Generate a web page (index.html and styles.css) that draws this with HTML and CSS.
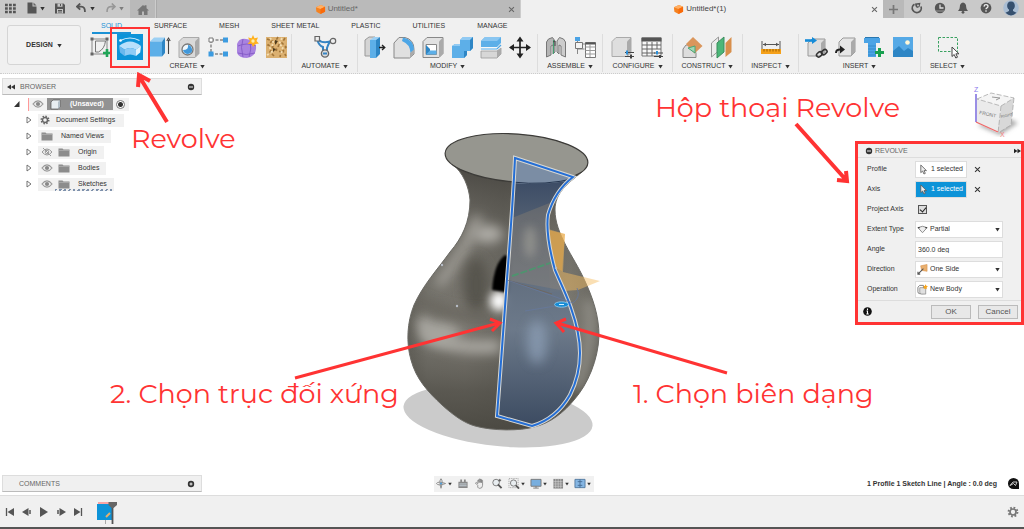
FILE: index.html
```
<!DOCTYPE html>
<html lang="en">
<head>
<meta charset="utf-8">
<meta name="viewport" content="width=device-width, initial-scale=1">
<title>Untitled*(1)</title>
<link rel="stylesheet" href="styles.css">
</head>
<body>
<svg class="defs" aria-hidden="true">
  <defs>
    <symbol id="caret" viewBox="0 0 5 5"><path d="M0.3 1h4.4L2.5 4.4z" fill="#333"/></symbol>
    <symbol id="cube-orange" viewBox="0 0 12 12"><path d="M1 3.5 6.5 1 11 3v5.5L6 11 1.5 8.5z" fill="#f58220"/><path d="M1 3.5 6.5 1 11 3 6 5.4z" fill="#ffb066"/><path d="M6 5.4V11l5-2.5V3z" fill="#fa6a0a"/></symbol>
    <symbol id="eye" viewBox="0 0 12 10"><path d="M1 5q5-6.4 10 0-5 6.4-10 0z" fill="#eee" stroke="#999" stroke-width="1.2"/><circle cx="6" cy="5" r="2.1" fill="#888"/></symbol>
    <symbol id="folder" viewBox="0 0 12 10"><path d="M.5 1.5h4l1 1h6v7H.5z" fill="#8c8c8c"/><path d="M.5 3.4h11" stroke="#b8b8b8" stroke-width=".7"/></symbol>
    <symbol id="tri" viewBox="0 0 6 8"><path d="M1 1v6l4-3z" fill="#fff" stroke="#666" stroke-width=".9"/></symbol>
    <symbol id="gear" viewBox="0 0 12 12"><circle cx="6" cy="6" r="4.4" fill="none" stroke="currentColor" stroke-width="2" stroke-dasharray="1.75 1.7"/><circle cx="6" cy="6" r="3" fill="none" stroke="currentColor" stroke-width="1.7"/></symbol>
    <symbol id="cursor" viewBox="0 0 10 12"><path d="M2 1v8.5l2-1.8 1.5 3.3 1.5-.7-1.4-3.1h2.7z" fill="#eee" stroke="#555" stroke-width=".9"/></symbol>
    <symbol id="minus" viewBox="0 0 8 8"><circle cx="4" cy="4" r="3.2" fill="#333"/><path d="M2 4h4" stroke="#eee"/></symbol>
    <symbol id="cross" viewBox="0 0 8 8"><path d="M1.2 1.2l5.6 5.6M6.8 1.2 1.2 6.8" stroke="currentColor" stroke-width="1.2"/></symbol>
  </defs>
</svg>

<header class="titlebar">
  <nav class="quick" aria-label="Quick access">
    <button aria-label="Data panel"><svg width="11" height="11" viewBox="0 0 11 11"><path d="M0 2h11M0 5.5h11M0 9h11" stroke="#555" stroke-width="2.6" stroke-dasharray="2.8 1.2"/></svg></button>
    <button aria-label="File"><svg width="10" height="12" viewBox="0 0 10 12"><path d="M.5.5h5v4h4v7h-9z" fill="#555"/><path d="M6.5.5l3 3h-3z" fill="#666"/></svg><svg class="caret"><use href="#caret"/></svg></button>
    <button aria-label="Save"><svg width="10" height="11" viewBox="0 0 10 11"><path d="M0 .5h8.5L10 2v8.5H0z" fill="#555"/><path d="M2.5.5h5v3.3h-5zM2 6h6v4.5H2z" fill="#c4c4c4"/><path d="M5.5 1v2M3 7.5h4M3 9h4" stroke="#555"/></svg></button>
    <button aria-label="Undo"><svg width="11" height="10" viewBox="0 0 11 10"><path d="M4.2.5 1 3.6l3.2 3M1.2 3.6h4q4 0 3.7 5.4" fill="none" stroke="#555" stroke-width="1.8"/></svg><svg class="caret"><use href="#caret"/></svg></button>
    <button class="faded" aria-label="Redo"><svg width="11" height="10" viewBox="0 0 11 10"><path d="M6.8.5 10 3.6l-3.2 3M9.8 3.6h-4Q1.800 3.6 2.100 9" fill="none" stroke="#666" stroke-width="1.6"/></svg><svg class="caret"><use href="#caret"/></svg></button>
  </nav>
  <button class="home" aria-label="Home"><svg width="12" height="10" viewBox="0 0 12 10"><path d="M0 5.5 6 0l1.500 1.300V.3h2v3L12 5.500h-1.500V10H7V6.500H5V10H1.500V5.500z" fill="#777"/></svg></button>
  <div class="doc"><a class="doc-name" href="#"><svg width="11" height="11"><use href="#cube-orange"/></svg>Untitled*</a><button aria-label="Close"><svg width="7" height="7"><use href="#cross"/></svg></button></div>
  <div class="doc active"><a class="doc-name" href="#"><svg width="11" height="11"><use href="#cube-orange"/></svg>Untitled*(1)</a><button aria-label="Close"><svg width="7" height="7"><use href="#cross"/></svg></button></div>
  <button class="plus" aria-label="New tab"><svg width="9" height="9" viewBox="0 0 9 9"><path d="M4.500 0v9M0 4.500h9" stroke="#777" stroke-width="1.700"/></svg></button>
  <nav class="account" aria-label="Account">
    <button aria-label="Extensions"><svg width="12" height="12" viewBox="0 0 12 12"><path d="M3.500 2.200A4.500 4.500 0 1 0 10 4.500" fill="none" stroke="#555" stroke-width="1.700"/><path d="M4 1.500 9.500.8 8.500 5 6 6 4.500 4.300z" fill="#555"/><circle cx="7" cy="3.500" r=".9" fill="#ccc"/></svg></button>
    <button aria-label="Jobs"><svg width="12" height="12" viewBox="0 0 12 12"><circle cx="6" cy="6" r="5.200" fill="#555"/><path d="M6 2.500V6h3.500" fill="none" stroke="#ddd" stroke-width="1.300"/><path d="M2 9h8" stroke="#999"/></svg></button>
    <button aria-label="Notifications"><svg width="12" height="12" viewBox="0 0 12 12"><path d="M6 .5q3.200.8 3.200 4.500 0 2.500 1.800 4H1q1.800-1.500 1.800-4Q2.800 1.300 6 .5z" fill="#555"/><circle cx="6" cy="10.300" r="1.400" fill="#555"/></svg></button>
    <button aria-label="Help"><svg width="12" height="12" viewBox="0 0 12 12"><circle cx="6" cy="6" r="5.400" fill="#555"/><path d="M4 4.600q.2-1.900 2-1.900 2 0 2 1.600 0 1-1 1.500t-1 1.500M6 8.300v1.400" fill="none" stroke="#eee" stroke-width="1.300"/></svg></button>
    <button aria-label="Profile"><svg width="16" height="16" viewBox="0 0 16 16"><circle cx="8" cy="8" r="7.800" fill="#a9bdd3"/><path d="M8 1.500c5 0 4.500 7 2 8v1.500l3.500 1.800Q8 18 2.500 12.800L6 11V9.500c-2.500-1-3-8 2-8z" fill="#36506e"/></svg></button>
  </nav>
</header>

<section class="ribbon">
  <button class="workspace">DESIGN <svg class="caret"><use href="#caret"/></svg></button>
  <div class="ribbon-body">
    <nav class="ribbon-tabs"><a class="on" href="#">SOLID</a><a href="#">SURFACE</a><a href="#">MESH</a><a href="#">SHEET METAL</a><a href="#">PLASTIC</a><a href="#">UTILITIES</a><a href="#">MANAGE</a></nav>
    <div class="groups">
      <div class="group">
        <div class="tools">
          <button aria-label="Create sketch"><svg viewBox="0 0 24 24"><path d="M4 4h15v15H4z" fill="none" stroke="#888"/><path d="M7.500 6v11h3q6-3 7-11z" fill="none" stroke="#777"/><path d="M2.500 2.500h3v3h-3zM17.500 2.500h3v3h-3zM2.500 17.500h3v3h-3z" fill="#666"/><path d="M19 14v8M15 18h8" stroke="#21a558" stroke-width="2.600"/></svg></button>
          <button class="revolve" aria-label="Revolve"><svg viewBox="0 0 26 26"><path d="M0 0h26v26H0z" fill="#0d93d8"/><path d="M3.500 6.500Q13 1.500 22.500 6.500" fill="none" stroke="#d6efff" stroke-width="1.200"/><circle cx="3.500" cy="6.500" r="1.300" fill="#fff"/><path d="M2 12Q13 3 24 12L19 15.500Q13 12.500 7.500 15.500z" fill="#b9e0fb"/><path d="M2 12l5.500 3.500V22L3 18.500z" fill="#69b7ed"/><path d="M7.500 15.500Q13 12.500 19 15.500V22Q13 19 7.500 22z" fill="#8fcbf5"/><path d="M19 15.500L24 12l-.8 6.500L19 22z" fill="#e3f3fd"/></svg></button>
          <button aria-label="Extrude"><svg viewBox="0 0 24 24"><path d="M2 6.500 6 2.500h11l-3 4z" fill="#9cd0f4"/><path d="M2 6.500h12v15H2z" fill="#5dafe8"/><path d="M14 6.500l3-4V18l-3 3.500z" fill="#2e86c5"/><path d="M20.500 5v14M18.800 6l1.700-3 1.700 3" fill="none" stroke="#444" stroke-width="1.100"/></svg></button>
          <button aria-label="Hole"><svg viewBox="0 0 24 24"><path d="M2 6.500 6 2.500h16v16l-4 4H2z" fill="#d9d9d9" stroke="#aaa"/><path d="M18 6.500l4-4v16l-4 4z" fill="#aaa"/><circle cx="10.500" cy="14.500" r="5.500" fill="#eef6fb" stroke="#777" stroke-width="1.300"/><path d="M11 10q1 5-5 5 1 4 5 4 5-1 4-5-1-4-4-4z" fill="#4198da"/></svg></button>
          <button aria-label="Pattern"><svg viewBox="0 0 24 24"><path d="M5 5h14M5 5v14h14" fill="none" stroke="#555" stroke-dasharray="3 1.500"/><path d="M3 3h4v4H3z" fill="#fff" stroke="#777"/><path d="M17 2.500h5v5h-5zM2.500 16.500h5v5h-5zM17 16.500h5v5h-5z" fill="#3c9be0"/></svg></button>
          <button aria-label="Create form"><svg viewBox="0 0 24 24"><path d="M2 9q2-6 9-5 11 1 10 10-1 8-9 9-8 0-10-5z" fill="#a983e0"/><path d="M3 11q9-4 18 0M3 18q8 3 17 0M8 4q-3 8 0 18M15 6q2 8-1 16" fill="none" stroke="#7d56c2" stroke-width=".8"/><path d="M18 0l1.500 3.200L23 2.500 21.500 6 24 8.500l-3.500.5L18 12l-1.500-3.200L12.500 9 15 6l-2-3.500 3.500.7z" fill="#ffb11f"/><circle cx="18" cy="6" r="1.700" fill="#fff0a8"/></svg></button>
          <button aria-label="Texture"><svg viewBox="0 0 24 24"><path d="M2 2h21v21H2z" fill="#dbb070"/><path d="M3 4l5 2-4 4 5 2-3 5 4 4M14 2l-3 5 4 3-3 5 5 2-1 5M21 3l-3 5 4 4-3 4 3 5" fill="none" stroke="#a2763a" stroke-width="1.600" stroke-dasharray="3 2"/><path d="M6 3l4 5-4 5 3 6M18 3l-3 6 4 3-2 7M3 20l4-2" fill="none" stroke="#f4dfb4" stroke-width="1.800" stroke-dasharray="2 2"/><path d="M11 5l3 1-3 4zM9 13l3 1-3 3z" fill="#4d3a1c"/></svg></button>
        </div>
        <button class="menu">CREATE <svg class="caret"><use href="#caret"/></svg></button>
      </div>
      <div class="group">
        <div class="tools"><button aria-label="Automate"><svg viewBox="0 0 24 24"><path d="M4 4q2 7 6 8v6M20 5q-4 1-6 8v5M4 4q7 6 16 1" fill="none" stroke="#3584c4" stroke-width="2"/><path d="M2 1.500h4.500V6H2z" fill="#eee" stroke="#666" stroke-width="1.200"/><circle cx="20" cy="6" r="2.700" fill="#eee" stroke="#666" stroke-width="1.200"/><circle cx="12" cy="18.500" r="3.600" fill="#ddd" stroke="#666" stroke-width="1.400"/><path d="M10 18.500h4" stroke="#3584c4" stroke-width="2"/></svg></button></div>
        <button class="menu">AUTOMATE <svg class="caret"><use href="#caret"/></svg></button>
      </div>
      <div class="group">
        <div class="tools">
          <button aria-label="Press pull"><svg viewBox="0 0 24 24"><path d="M2 5l4-3h6v19H2z" fill="#d4d4d4" stroke="#999"/><path d="M7 5l4-3h6l-4 3z" fill="#9cd0f4"/><path d="M7 5h6v18H7z" fill="#5dafe8"/><path d="M13 5l4-3v17l-4 4z" fill="#2e86c5"/><path d="M16 12.500h5M19 10l2.800 2.500L19 15" fill="none" stroke="#222" stroke-width="1.300"/></svg></button>
          <button aria-label="Fillet"><svg viewBox="0 0 24 24"><path d="M2 8l5-5.500h6q9 2 9 12V19l-4.500 4H2z" fill="#e0e0e0" stroke="#888"/><path d="M11 2.500q11 2 11 13l-3.500 2.500Q18 9 10 6z" fill="#4da6e6"/><path d="M18 18v4.500l4-4v-4z" fill="#aaa"/></svg></button>
          <button aria-label="Shell"><svg viewBox="0 0 24 24"><path d="M2 6.500 6 2.500h16v16l-4 4H2z" fill="#e2e2e2" stroke="#888"/><path d="M18 6.500l4-4v16l-4 4z" fill="#aaa"/><path d="M5 9.500h10.500v10H5z" fill="#fff" stroke="#888"/><path d="M5 10l4 4v5.500H5z" fill="#2e86c5"/><path d="M5 19.500l4-4h6.500v4z" fill="#5dafe8"/></svg></button>
          <button aria-label="Combine"><svg viewBox="0 0 24 24"><path d="M10 5l3-3h10v11l-3 3h-3v4l-3 3H2V11l3-2h5z" fill="#5dafe8"/><path d="M10 5l3-3h10l-3 3zM2 11l3-2h5v2z" fill="#91caf3"/><path d="M20 5l3-3v11l-3 3zM14 16h3v4l-3 3z" fill="#2e86c5"/></svg></button>
          <button aria-label="Split body"><svg viewBox="0 0 24 24"><path d="M2 6l4-4h16v6l-4 4H2z" fill="#5dafe8"/><path d="M2 6l4-4h16l-4 4z" fill="#8ac6f1"/><path d="M2 14h20" stroke="#fff" stroke-width="3"/><path d="M2 14h16l4-4" fill="none" stroke="#4da6e6" stroke-width="1.200"/><path d="M2 16h16l4-3v6l-4 4H2z" fill="#d7d7d7" stroke="#999" stroke-width=".8"/><path d="M18 16l4-3v6l-4 4z" fill="#aaa"/></svg></button>
          <button aria-label="Move"><svg viewBox="0 0 24 24"><path d="M12 3v19M2.500 12.500h19" stroke="#222" stroke-width="1.700"/><path d="M12 1.500l3.500 5h-7zM12 23.500l3.500-5h-7zM1 12.500l5-3.500v7zM23 12.500l-5-3.500v7z" fill="#222"/></svg></button>
        </div>
        <button class="menu">MODIFY <svg class="caret"><use href="#caret"/></svg></button>
      </div>
      <div class="group">
        <div class="tools">
          <button aria-label="Joint"><svg viewBox="0 0 24 24"><path d="M2.500 7l2-3 4-1.500L11 6v11l-2 2V10l-2 1v9l-4.500 2z" fill="#b5b5b5" stroke="#777"/><path d="M21.500 7l-2-3-4-1.500L13 6v11l2 2V10l2 1v9l4.500 2z" fill="#ccc" stroke="#777"/><path d="M9.500 5v14" stroke="#42a070"/><path d="M9 7l2-1v5" stroke="#444" fill="none"/></svg></button>
          <button aria-label="Component list"><svg viewBox="0 0 24 24"><path d="M2 2h5v4H2z" fill="#4ba3e5"/><path d="M4.500 6v13M4.500 9h9M4.500 14h7" stroke="#888" fill="none"/><path d="M2.500 7.500h7v6h-7z" fill="#f4f4f4" stroke="#777"/><path d="M12.500 7.500h10v15h-10z" fill="#fff" stroke="#777"/><path d="M12.500 8.500h10" stroke="#555" stroke-width="2"/><path d="M12.500 12h10M12.500 15.500h10M12.500 19h10M17 9v13" stroke="#999"/></svg></button>
        </div>
        <button class="menu">ASSEMBLE <svg class="caret"><use href="#caret"/></svg></button>
      </div>
      <div class="group">
        <div class="tools">
          <button aria-label="Configure"><svg viewBox="0 0 24 24"><path d="M1 6.500 5 2.500h15v15l-4 4H1z" fill="#dedede" stroke="#aaa"/><path d="M16 6.500l4-4v15l-4 4z" fill="#aaa"/><path d="M14 17.500h9M14 21.500h9" stroke="#444" stroke-width="1.200"/><path d="M16 15.500v4" stroke="#2b8fd8" stroke-width="2"/><path d="M20 19.500v4" stroke="#444" stroke-width="2"/></svg></button>
          <button aria-label="Configuration table"><svg viewBox="0 0 24 24"><path d="M2 3h19v18H2z" fill="#f8f8f8" stroke="#777"/><path d="M1.500 2.500h20v4h-20z" fill="#555"/><path d="M2 10h19M2 14h19M2 18h13M7 7v14M12 7v14M17 7v7" stroke="#666"/><path d="M14 18h9M14 21.500h9" stroke="#444"/><path d="M17 16v3.500" stroke="#2b8fd8" stroke-width="2"/><path d="M20 20v3" stroke="#444" stroke-width="2"/></svg></button>
        </div>
        <button class="menu">CONFIGURE <svg class="caret"><use href="#caret"/></svg></button>
      </div>
      <div class="group">
        <div class="tools">
          <button aria-label="Offset plane"><svg viewBox="0 0 24 24"><path d="M2 14l3-4h6l4 8v4.500H2z" fill="#ddd" stroke="#888"/><path d="M12 2l9.500 9-8 7.500L5 9z" fill="#da965c"/><path d="M7 13l7-2v7z" fill="#9ed7b7" stroke="#4aa574"/></svg></button>
          <button aria-label="Midplane"><svg viewBox="0 0 24 24"><path d="M1.500 8l7-6v14l-7 6z" fill="#ececec" stroke="#999"/><path d="M7 8l7-6v15l-7 6z" fill="#4bb678" stroke="#3a8d5d"/><path d="M15.500 8l6-6v15l-6 5z" fill="#d88f4c"/></svg></button>
        </div>
        <button class="menu">CONSTRUCT <svg class="caret"><use href="#caret"/></svg></button>
      </div>
      <div class="group">
        <div class="tools"><button aria-label="Measure"><svg viewBox="0 0 24 24"><path d="M3 6v8M21 6v8M4 9.500h16" stroke="#555" fill="none"/><path d="M4 9.500l3-1.800v3.600zM20 9.500l-3-1.800v3.600z" fill="#555"/><path d="M2 14h20v5H2z" fill="#f5a11a"/><path d="M5 14v2.500M8 14v2.500M11 14v2.500M14 14v2.500M17 14v2.500M20 14v2.500" stroke="#9a5e00"/></svg></button></div>
        <button class="menu">INSPECT <svg class="caret"><use href="#caret"/></svg></button>
      </div>
      <div class="group">
        <div class="tools">
          <button aria-label="Insert derive"><svg viewBox="0 0 24 24"><path d="M4 8l4-4h13v13l-4 4H4z" fill="#dedede" stroke="#999"/><path d="M17 8l4-4v13l-4 4z" fill="#aaa"/><path d="M1 5.500h8" stroke="#168cd8" stroke-width="2.600"/><path d="M8 2l5 3.500L8 9z" fill="#168cd8"/><g fill="none" stroke="#333" stroke-width="1.600"><rect x="12" y="17.500" width="6" height="4" rx="2" transform="rotate(-40 15 19)"/><rect x="16.500" y="15" width="6" height="4" rx="2" transform="rotate(-40 20 16)"/></g></svg></button>
          <button aria-label="Insert component"><svg viewBox="0 0 24 24"><path d="M6 7l4-4h12v14l-4 4H6z" fill="#e6e6e6" stroke="#999"/><path d="M18 7l4-4v14l-4 4z" fill="#aaa"/><path d="M3 18q0-4 5-3.500" fill="none" stroke="#222" stroke-width="2"/><path d="M7 10.500l5 4-5 4z" fill="#222"/></svg></button>
          <button aria-label="Insert fastener"><svg viewBox="0 0 24 24"><path d="M2 3h16v5H2z" fill="#4ba3e5"/><path d="M3 2.500h14" stroke="#2877b0"/><path d="M6 8h8v14H6z" fill="#4ba3e5"/><path d="M6 11h8M6 14h8M6 17h8M6 20h8" stroke="#2f86c6" stroke-width=".8"/><path d="M17.500 13v9M13 17.500h9" stroke="#18a050" stroke-width="3"/></svg></button>
          <button aria-label="Insert image"><svg viewBox="0 0 24 24"><path d="M2 2h20v20H2z" fill="#55a9e6"/><path d="M2 16l6-5 5 5 4-3 5 3v6H2z" fill="#2e86c5"/><circle cx="16.500" cy="7.500" r="2.300" fill="#fff7d6"/></svg></button>
        </div>
        <button class="menu">INSERT <svg class="caret"><use href="#caret"/></svg></button>
      </div>
      <div class="group">
        <div class="tools"><button aria-label="Select"><svg viewBox="0 0 24 24"><path d="M2.500 2.500h19v14h-19z" fill="none" stroke="#39a160" stroke-dasharray="2.500 1.500"/><path d="M16 12v9.500l2.200-2 1.600 3.500 1.700-.8-1.600-3.400H23z" fill="#fff" stroke="#444"/></svg></button></div>
        <button class="menu">SELECT <svg class="caret"><use href="#caret"/></svg></button>
      </div>
    </div>
  </div>
</section>

<main class="canvas">
  <div class="scene">
    <svg viewBox="110 120 770 340" width="770" height="340" aria-label="Vase model">
      <defs>
        <linearGradient id="body" x1="408" x2="599" y1="0" y2="0" gradientUnits="userSpaceOnUse"><stop offset="0" stop-color="#605e57"/><stop offset=".1" stop-color="#77756e"/><stop offset=".3" stop-color="#7b7871"/><stop offset=".5" stop-color="#6b6962"/><stop offset=".85" stop-color="#7d7b73"/><stop offset="1" stop-color="#6a6861"/></linearGradient>
        <linearGradient id="shade" x1="0" x2="0" y1="170" y2="430" gradientUnits="userSpaceOnUse"><stop offset="0" stop-color="#45433e" stop-opacity=".85"/><stop offset=".25" stop-color="#56544e" stop-opacity=".35"/><stop offset=".6" stop-color="#66645d" stop-opacity=".1"/><stop offset=".85" stop-color="#504e47" stop-opacity=".75"/><stop offset="1" stop-color="#4a4841" stop-opacity=".95"/></linearGradient>
        <linearGradient id="prof" x1="0" x2="0" y1="184" y2="426" gradientUnits="userSpaceOnUse"><stop offset="0" stop-color="#3c4d68"/><stop offset=".2" stop-color="#586577"/><stop offset=".6" stop-color="#6c7a8c"/><stop offset="1" stop-color="#3b4b63"/></linearGradient>
        <filter id="b3" x="400" y="120" width="210" height="320" filterUnits="userSpaceOnUse"><feGaussianBlur stdDeviation="4"/></filter>
        <filter id="b7" x="380" y="120" width="240" height="330" filterUnits="userSpaceOnUse"><feGaussianBlur stdDeviation="6"/></filter>
        <filter id="b1" x="-30%" y="-30%" width="160%" height="160%"><feGaussianBlur stdDeviation="1.200"/></filter>
        <path id="vase" d="M452 164C463 172 469 187 470 200C470 222 462 238 450 252C437 270 423 285 414 305C407 322 406 343 411 360C416 379 428 392 442 405C453 415 464 423 475 426C493 431 520 431 534 427C551 423 564 412 574 400C588 384 598 360 599 336C599 316 593 298 584 279C574 257 555 234 555 210C555 193 567 184 582 172Z"/>
        <path id="profile" d="M515 158L573 177C560 187 552 201 548 215C546 230 549 248 555 270C560 282 567 296 571 308C577 325 580 340 580 353C580 368 576 383 570 395C562 409 549 421 532 426L497 416C500 374 505 310 507 279C510 240 513 201 515 158Z"/>
        <clipPath id="clip"><use href="#vase"/></clipPath>
        <clipPath id="pclip"><use href="#profile"/></clipPath>
      </defs>
      <ellipse cx="498" cy="416" rx="95" ry="30" transform="rotate(6 498 416)" fill="#cbcbcb"/>
      <use href="#vase" fill="url(#body)"/>
      <g clip-path="url(#clip)">
        <use href="#vase" fill="url(#shade)"/>
        <path d="M478 216Q470 245 438 285" stroke="#a4a29b" stroke-width="9" fill="none" filter="url(#b7)"/>
        <ellipse cx="488" cy="234" rx="15" ry="9" fill="#b0aea8" filter="url(#b7)"/>
        <path d="M422 318Q430 352 500 346" stroke="#aeaca6" stroke-width="12" fill="none" filter="url(#b7)"/>
        <ellipse cx="440" cy="334" rx="20" ry="12" fill="#a6a49e" filter="url(#b7)"/>
        <ellipse cx="476" cy="285" rx="13" ry="28" fill="#57544d" filter="url(#b7)"/>
        <path d="M418 300Q450 318 492 316" stroke="#66635c" stroke-width="8" fill="none" filter="url(#b7)"/>
        <ellipse cx="499" cy="301" rx="9" ry="10" fill="#fff" filter="url(#b3)"/>
        <path d="M505 255Q494 263 492 290L510 293L512 258Z" fill="#050505" filter="url(#b1)"/>
        <path d="M588 300Q596 335 577 390" stroke="#96948d" stroke-width="9" fill="none" filter="url(#b7)"/>
      </g>
      <use href="#vase" fill="none" stroke="#6b6a65" stroke-width="1"/>
      <ellipse cx="516.500" cy="158" rx="71.500" ry="24" transform="rotate(4 516.500 158)" fill="#96968f" stroke="#3c3b38" stroke-width="1.200"/>
      <path d="M548 229L565 234L563 272L600 281L578 290L550 292Z" fill="#f5bd61" opacity=".48"/>
      <path d="M548 230L565 234L562 271L554 267Z" fill="#e5a645" opacity=".55"/>
      <g clip-path="url(#pclip)">
        <path d="M497 180L580 180L590 430H490Z" fill="url(#prof)" opacity=".94"/>
        <path d="M510 150H580V179Q546 186 512 183Z" fill="#7b8da4"/>
        <path d="M512 182Q546 186 576 178" fill="none" stroke="#26364f"/>
        <path d="M512 218L552 202L560 290L507 280Z" fill="#a49173" opacity=".28"/>
        <ellipse cx="530" cy="242" rx="6" ry="16" fill="#a5a49c" opacity=".6" filter="url(#b3)"/>
        <ellipse cx="537" cy="342" rx="10" ry="22" fill="#8ea0b7" opacity=".75" filter="url(#b7)"/>
        <path d="M512 276L553 262" stroke="#4f936f" stroke-width="2" stroke-dasharray="7 2"/>
        <path d="M507 280L552 294" stroke="#74624d" opacity=".6"/>
      </g>
      <use href="#profile" fill="none" stroke="#d8d8d4" stroke-width="4"/>
      <use href="#profile" fill="none" stroke="#246ed5" stroke-width="2"/>
      <path d="M507 280L573 303Q581 297 577 288M525 311L555 306" fill="none" stroke="#66799d" stroke-width=".8"/>
      <ellipse cx="561.500" cy="304.500" rx="7" ry="2.700" fill="#178bd4" stroke="#95cef0" stroke-width=".8"/><path d="M559 304.500h5" stroke="#d8f2ff"/>
      <circle cx="442" cy="265" r="1.200" fill="#b7bdc7"/><circle cx="457" cy="306" r="1.200" fill="#b7bdc7"/><circle cx="556" cy="268" r="1.200" fill="#b7bdc7"/>
      <g class="arrow"><path d="M295 378L499 323M490 319L500 323L492 331"/><path d="M727 373L557 323M566 319L556 323L564 332"/></g>
    </svg>
    <span class="note note-axis">2. Chọn trục đối xứng</span>
    <span class="note note-profile">1. Chọn biên dạng</span>
  </div>

  <svg class="callout callout-tool arrow" width="36" height="54" viewBox="0 0 36 54"><path d="M33 50L5 4M4 15L5 3L16 9"/></svg>
  <span class="note note-tool">Revolve</span>
  <svg class="callout callout-dialog arrow" width="60" height="66" viewBox="0 0 60 66"><path d="M5 3L56 60M55 50L56 60L46 59"/></svg>
  <span class="note note-dialog">Hộp thoại Revolve</span>

  <div class="top">
    <aside class="browser">
      <h2 class="bar"><svg width="8" height="6" viewBox="0 0 8 6"><path d="M4 .5v5L0 3zM8 .5v5L4 3z" fill="#333"/></svg><span>BROWSER</span><svg width="8" height="8"><use href="#minus"/></svg></h2>
      <ul class="tree">
        <li class="root"><svg class="twist" viewBox="0 0 6 8"><path d="M5.500 1v6H0z" fill="#333"/></svg><div class="item pinned"><svg class="glyph"><use href="#eye"/></svg><span class="selected"><svg width="11" height="11" viewBox="0 0 11 11"><path d="M1 3l2-2h7v7l-2 2H1z" fill="#e8eef2" stroke="#555" stroke-width=".7"/><path d="M8 3l2-2v7l-2 2z" fill="#b3c0c9"/></svg><b>(Unsaved)</b></span><input type="radio" aria-label="Activate component" checked></div></li>
        <li><svg class="twist"><use href="#tri"/></svg><div class="item settings-row"><svg class="glyph gear"><use href="#gear"/></svg><span>Document Settings</span></div></li>
        <li><svg class="twist"><use href="#tri"/></svg><div class="item"><svg class="glyph"><use href="#folder"/></svg><span>Named Views</span></div></li>
        <li><svg class="twist"><use href="#tri"/></svg><div class="item"><svg class="glyph off" viewBox="0 0 12 10"><path d="M1 5q5-6 10 0-5 6-10 0zM2 1l8 8" fill="none" stroke="#999"/><circle cx="6" cy="5" r="1.800" fill="none" stroke="#999"/></svg><svg class="glyph"><use href="#folder"/></svg><span>Origin</span></div></li>
        <li><svg class="twist"><use href="#tri"/></svg><div class="item"><svg class="glyph"><use href="#eye"/></svg><svg class="glyph"><use href="#folder"/></svg><span>Bodies</span></div></li>
        <li><svg class="twist"><use href="#tri"/></svg><div class="item sketches"><svg class="glyph"><use href="#eye"/></svg><svg class="glyph"><use href="#folder"/></svg><span>Sketches</span></div></li>
      </ul>
    </aside>

    <aside class="right">
      <svg class="viewcube" width="50" height="56" viewBox="0 0 50 56" aria-label="View cube">
        <defs><filter id="cs"><feGaussianBlur stdDeviation="2"/></filter></defs>
        <path d="M7 42L30 52L48 40L40 36z" fill="#aaa" filter="url(#cs)"/>
        <path d="M7 16L21 10L44 15L31 23z" fill="#f5f5f5"/><path d="M7 16L31 23L28 50L7 40z" fill="#ebebeb"/><path d="M31 23L44 15L41 42L28 50z" fill="#d8d8d8"/>
        <path d="M7 16L21 10L44 15L31 23zM31 23L28 50M44 15L41 42L28 50" fill="none" stroke="#aaa" stroke-width=".8" stroke-dasharray="5 2"/>
        <path d="M22 14l8 1-4 2" fill="none" stroke="#999"/>
        <path d="M6 11V39" stroke="#7869dc" stroke-width="1.500"/><path d="M6 39L28 49" stroke="#f06767" stroke-width="1.300"/>
        <text x="4" y="9" fill="#8a78eb" font-size="7">Z</text><text x="30" y="54" fill="#f78181" font-size="7">X</text>
        <text x="9" y="31" font-size="5" fill="#777" transform="rotate(12 9 31)">FRONT</text><text x="31" y="35" font-size="4" fill="#777" transform="rotate(-12 31 35)">RIGHT</text>
      </svg>
      <form class="dialog">
        <h2><svg width="8" height="8"><use href="#minus"/></svg><span>REVOLVE</span><svg width="7" height="6" viewBox="0 0 8 6"><path d="M0 .5v5L4 3zM4 .5v5L8 3z" fill="#222"/></svg></h2>
        <div class="fields">
          <label for="profile-pick">Profile</label><div class="line"><button type="button" id="profile-pick" class="pick"><svg width="9" height="11"><use href="#cursor"/></svg>1 selected</button><button type="button" class="clear" aria-label="Clear profile"><svg width="7" height="7"><use href="#cross"/></svg></button></div>
          <label for="axis-pick">Axis</label><div class="line"><button type="button" id="axis-pick" class="pick live"><svg width="9" height="11"><use href="#cursor"/></svg>1 selected</button><button type="button" class="clear" aria-label="Clear axis"><svg width="7" height="7"><use href="#cross"/></svg></button></div>
          <label for="project">Project Axis</label><div class="line"><input id="project" type="checkbox" checked></div>
          <label for="extent">Extent Type</label><div class="drop"><svg viewBox="0 0 12 12"><path d="M1 4q5-3 10 0L6 9.500z" fill="#eee" stroke="#888"/><path d="M1 4h2M9 4h2" stroke="#444" stroke-width="1.500"/></svg><select id="extent"><option>Partial</option></select><svg class="caret"><use href="#caret"/></svg></div>
          <label for="angle">Angle</label><input id="angle" type="text" value="360.0 deg">
          <label for="direction">Direction</label><div class="drop"><svg viewBox="0 0 12 12"><path d="M4 2l7-1.500V8L5 7z" fill="#eab06f" stroke="#d49047" stroke-width=".6"/><path d="M1 11l6-6M1 8.500V11h2.500" fill="none" stroke="#555" stroke-width="1.200"/></svg><select id="direction"><option>One Side</option></select><svg class="caret"><use href="#caret"/></svg></div>
          <label for="operation">Operation</label><div class="drop"><svg viewBox="0 0 12 12"><path d="M1 3.500 3 1.500h4v9H3q-2 0-2-2z" fill="#fff" stroke="#777"/><path d="M3 4h6.500v7H5q-2 0-2-2z" fill="#e0e0e0" stroke="#888" stroke-width=".8"/><path d="M9.300.2l.8 1.700 1.800.6-1.400 1.300.1 1.900-1.600-.9-1.700.7.4-1.900L6.500 2.300l1.900-.2z" fill="#f8a51b"/></svg><select id="operation"><option>New Body</option></select><svg class="caret"><use href="#caret"/></svg></div>
        </div>
        <footer><svg width="9" height="9" viewBox="0 0 9 9"><circle cx="4.500" cy="4.500" r="4.300" fill="#111"/><path d="M4.500 1.500v1.500M3.500 4h1v3M3.300 7h2.500" stroke="#fff" stroke-width="1.100" fill="none"/></svg><button type="submit">OK</button><button type="button">Cancel</button></footer>
      </form>
    </aside>
  </div>

  <div class="bottom">
    <h2 class="bar comments"><span>COMMENTS</span><svg width="8" height="8" viewBox="0 0 8 8"><circle cx="4" cy="4" r="3.200" fill="#333"/><path d="M2.500 4h3M4 2.500v3" stroke="#eee"/></svg></h2>
    <nav class="viewtools" aria-label="Navigation">
      <button aria-label="Orbit"><svg viewBox="0 0 12 12"><path d="M6 .8q2.500 2 0 10.400-2.500-8.400 0-10.400zM1 6q2-3 10 0-8 3-10 0z" fill="none" stroke="#888"/><circle cx="6" cy="6" r="1" fill="#3c9be0"/></svg><svg class="caret"><use href="#caret"/></svg></button>
      <button aria-label="Look at"><svg viewBox="0 0 12 12"><path d="M1 4h10v7H1zM3 1.500h2V4H3zM7 1.500h2V4H7z" fill="#888"/><path d="M2 6.500h8M2 8.500h8" stroke="#c9d7df"/></svg></button>
      <button aria-label="Pan"><svg viewBox="0 0 12 12"><path d="M3.500 8 1 5.500l1-.7 1.600 1.400V2.500h1.300V5 1.200h1.300V5 1.500h1.300v3.700-2.700h1.300V8q0 3.300-3 3.300-1.500 0-2.300-1.300z" fill="#eee" stroke="#777" stroke-width=".8"/></svg></button>
      <button aria-label="Zoom"><svg viewBox="0 0 12 12"><circle cx="5" cy="5" r="3.600" fill="#e8edf0" stroke="#777"/><path d="M7 7l4 4" stroke="#555" stroke-width="2"/><path d="M9 1v3M7.500 2.500h3" stroke="#555"/></svg></button>
      <button aria-label="Zoom window"><svg viewBox="0 0 12 12"><path d="M.5.500h10v10H.5z" fill="none" stroke="#999" stroke-dasharray="1 1"/><circle cx="5.500" cy="5.500" r="3.400" fill="#e8edf0" stroke="#777"/><path d="M8 8l3.500 3.500" stroke="#555" stroke-width="2"/></svg><svg class="caret"><use href="#caret"/></svg></button>
      <button aria-label="Display"><svg viewBox="0 0 12 12"><path d="M.5 1.500h11v7.500H.5z" fill="#78aede" stroke="#777"/><path d="M6 9v2M3 11h6" stroke="#777"/></svg><svg class="caret"><use href="#caret"/></svg></button>
      <button aria-label="Grid"><svg viewBox="0 0 12 12"><path d="M1 1h10.500v10.500H1z" fill="#888"/><path d="M3.500 1v10M6.200 1v10M9 1v10M1 4h10M1 6.500h10M1 9h10" stroke="#ddd" stroke-width=".6"/></svg><svg class="caret"><use href="#caret"/></svg></button>
      <button aria-label="Viewports"><svg viewBox="0 0 12 12"><path d="M.5 1.500h11v9H.5z" fill="#85b6e3" stroke="#5279a0"/><path d="M6 1.500v9M3.500 4h5M3.500 8h5" stroke="#456b93"/></svg><svg class="caret"><use href="#caret"/></svg></button>
    </nav>
    <div class="status"><b>1 Profile 1 Sketch Line | Angle : 0.0 deg</b><svg width="11" height="11" viewBox="0 0 11 11"><path d="M5.500 0A5.500 5.500 0 1 0 5.500 11H11V5.500A5.500 5.500 0 0 0 5.500 0z" fill="#111"/><path d="M2 7.500 5 4h4L7.500 7.500 5.500 5.500z" fill="none" stroke="#ddd" stroke-width=".9"/></svg></div>
  </div>
</main>

<footer class="timeline">
  <button aria-label="First"><svg viewBox="0 0 10 10"><path d="M1.500 1v8" stroke="#555" stroke-width="1.300"/><path d="M9 1v8L2.500 5z" fill="#555"/></svg></button>
  <button aria-label="Step back"><svg viewBox="0 0 10 10"><path d="M6.500 1v8L0 5z" fill="#555"/><path d="M8 3v4" stroke="#555" stroke-width="1.500"/></svg></button>
  <button aria-label="Play"><svg viewBox="0 0 10 10"><path d="M1 0v10l8-5z" fill="#555"/></svg></button>
  <button aria-label="Step forward"><svg viewBox="0 0 10 10"><path d="M3.500 1v8L10 5z" fill="#555"/><path d="M2 3v4" stroke="#555" stroke-width="1.500"/></svg></button>
  <button aria-label="Last"><svg viewBox="0 0 10 10"><path d="M8.500 1v8" stroke="#555" stroke-width="1.300"/><path d="M1 1v8l6.500-4z" fill="#555"/></svg></button>
  <svg class="marker" width="22" height="24" viewBox="0 0 22 24"><path d="M2 2h13v2H2z" fill="#f7a5a5"/><path d="M1 4h16v16H1z" fill="#0d93d8"/><path d="M9.500 20v4" stroke="#aaa"/><path d="M16.500 5v19" stroke="#555" stroke-width="1.800"/><path d="M12.500 2H21v3l-3.500 3h-2l-3-3z" fill="#666"/><path d="M10 17l4-4" stroke="#e7b06c" stroke-width="2"/></svg>
  <button class="settings" aria-label="Settings"><svg viewBox="0 0 12 12"><use href="#gear"/></svg></button>
</footer>
</body>
</html>
```
FILE: styles.css
```
* { box-sizing: border-box; }
body { margin: 0; min-height: 100vh; display: flex; flex-direction: column; font: 7px/10px "Liberation Sans", Arial, sans-serif; color: #333; background: #fff; overflow-x: hidden; }
svg { display: block; flex: none; }
button { font: inherit; color: inherit; background: none; border: 0; padding: 0; display: flex; align-items: center; justify-content: center; gap: 3px; }
a { color: inherit; text-decoration: none; }
h2 { margin: 0; font: inherit; }
.defs { position: absolute; width: 0; height: 0; }
.caret { width: 5px; height: 5px; }

.titlebar { display: flex; height: 18px; background: #c9c9c9; }
.quick { width: 130px; display: flex; align-items: center; justify-content: space-between; padding: 0 6px 2px 5px; }
.faded { opacity: .5; }
.home { width: 26px; background: #b9b9b9; border-right: 1px solid #ccc; padding-top: 2px; }
.doc { flex: 1; display: flex; background: #bababa; color: #666; font-size: 8px; padding: 0 5px 0 8px; border-left: 1px solid #aaa; }
.doc-name { flex: 1; display: flex; align-items: center; justify-content: center; gap: 2px; }
.doc.active { background: #f0f0f0; border-left-color: #ccc; }
.active .doc-name { color: #444; }
.plus { width: 21px; background: #b9b9b9; }
.account { width: 120px; display: flex; align-items: center; justify-content: space-between; padding: 0 5px 2px 7px; }

.ribbon { display: flex; height: 56px; background: #f0f0f0; border-bottom: 1px dotted #ccc; }
.workspace { width: 74px; margin: 7px 3px 8px 7px; border: 1px solid #d5d5d5; border-radius: 3px; font-weight: bold; gap: 4px; background: #f2f2f2; }
.ribbon-body { flex: 1; min-width: 0; display: flex; flex-direction: column; }
.ribbon-tabs { height: 16px; display: flex; gap: 14px; padding-left: 8px; }
.ribbon-tabs a { padding: 3px 9px 1px; border-bottom: 2px solid transparent; white-space: nowrap; }
.ribbon-tabs .on { color: #1b91d5; border-color: #1b91d5; }
.groups { flex: 1; display: grid; grid-template-columns: 208fr 66fr 180fr 65fr 70fr 70fr 56fr 122fr 53fr 50fr; padding-bottom: 2px; }
.group { min-width: 0; display: flex; flex-direction: column; align-items: center; border-right: 1px solid #ddd; }
.group:last-child { border: 0; }
.tools { display: flex; height: 26px; align-items: center; gap: 5px; }
.tools button { position: relative; }
.tools svg { width: 24px; height: 24px; }
.tools .revolve svg { width: 26px; height: 26px; }
.revolve::after { content: ""; position: absolute; z-index: 2; inset: -7px -7px -8px -7px; border: 2px solid #f33; }
.menu { height: 12px; white-space: nowrap; }

.canvas { position: relative; flex: 1; min-height: 421px; display: flex; flex-direction: column; justify-content: space-between; }
.scene { position: absolute; left: calc(50% - 402px); top: 46px; width: 770px; }
.arrow { fill: none; stroke: #f33; stroke-width: 4; }
.scene .arrow { stroke-width: 3; }
.callout { position: absolute; z-index: 3; }
.callout-tool { left: 134px; top: -2px; }
.callout-dialog { right: 173px; top: 47px; }
.note { position: absolute; z-index: 2; font: 27px/32px Montserrat, Inter, sans-serif; color: #f33; white-space: nowrap; }
.note-tool { left: 131px; top: 49px; }
.note-dialog { right: 124px; top: 18px; }
.note-axis { left: 0; top: 258px; }
.note-profile { left: 523px; top: 258px; }

.top, .bottom { position: relative; display: flex; justify-content: space-between; }
.browser { width: 200px; margin: 4px 0 0 2px; }
.bar { height: 17px; display: flex; align-items: center; gap: 5px; padding: 0 6px 0 4px; background: #f0f0f0; border: 1px solid #ddd; border-bottom-color: #bbb; color: #666; }
.bar span { flex: 1; }
.comments { width: 200px; padding-left: 16px; }
.tree { list-style: none; margin: 1px 0 0; padding: 0; }
.tree li { height: 16px; display: flex; align-items: center; gap: 6px; padding-left: 24px; }
.tree .root { padding-left: 12px; gap: 8px; }
.twist { width: 6px; height: 8px; }
.item { height: 13px; display: flex; align-items: center; gap: 5px; padding: 0 7px 0 3px; background: #f1f1f1; }
.item span { padding-left: 3px; }
.item.settings-row { gap: 2px; padding: 0 9px 0 1px; }
.glyph { width: 12px; height: 10px; }
.gear { color: #666; }
.pinned { border-left: 1px solid #f99; gap: 3px; padding-right: 4px; }
.item .selected { display: flex; align-items: center; gap: 9px; width: 66px; height: 12px; padding-left: 3px; background: #929292; color: #fff; }
.item input { appearance: none; margin: 0; width: 9px; height: 9px; border: 1px solid #777; border-radius: 50%; background: radial-gradient(#333 0 2px, #fff 3px); }
.item.sketches { position: relative; }
.sketches::after { content: ""; position: absolute; left: 17px; right: 0; bottom: 0; height: 2px; background: repeating-linear-gradient(120deg, #7f92ad 0 2px, transparent 2px 4px); }

.right { width: 169px; display: flex; flex-direction: column; }
.viewcube { margin: 9px 0 2px 115px; font-family: "Liberation Sans", Arial, sans-serif; }
.dialog { position: relative; border: 3px solid #f33; background: #f0f0f0; }
.dialog h2 { display: flex; align-items: center; gap: 2px; height: 14px; padding: 0 0 0 7px; border-bottom: 1px solid #ddd; color: #666; }
.dialog h2 span { flex: 1; }
.fields { display: grid; grid-template-columns: 48px 88px; grid-auto-rows: 18px; row-gap: 2px; align-items: center; padding: 2px 0 2px 9px; }
.line, .drop { display: flex; align-items: center; position: relative; height: 18px; }
.pick { height: 17px; width: 52px; background: #fff; border: 1px solid #ddd; }
.pick.live { background: #0d93d8; color: #fff; }
.clear { width: 20px; height: 16px; }
.fields input[type="checkbox"] { width: 9px; height: 9px; margin: 0 3px; appearance: none; border: 1px solid #555; background: #ddd; position: relative; }
.fields input[type="checkbox"]::after { content: ""; position: absolute; left: 2px; top: 0; width: 3px; height: 5px; border: solid #222; border-width: 0 1px 1px 0; transform: rotate(40deg); }
.fields select, .fields input[type="text"] { font: inherit; color: #333; width: 100%; height: 17px; background: #fff; border: 1px solid #ddd; border-radius: 0; padding: 0 2px; appearance: none; }
.fields select { padding-left: 14px; }
.drop svg { position: absolute; left: 2px; width: 11px; height: 11px; }
.drop .caret { left: auto; right: 3px; width: 5px; height: 5px; }
.dialog footer { display: flex; align-items: center; gap: 7px; height: 22px; padding: 0 3px 0 5px; border-top: 1px solid #ddd; }
.dialog footer svg { margin-right: auto; }
.dialog footer button { width: 40px; height: 14px; border: 1px solid #bbb; background: #e8e8e8; font-size: 8px; color: #555; }

.bottom { display: grid; grid-template-columns: 1fr auto 1fr; align-items: center; padding: 0 5px 3px 2px; }
.viewtools { display: flex; align-items: center; gap: 5px; height: 16px; margin-left: 6px; padding: 0 3px 0 1px; background: #f1f1f1; }
.viewtools button { gap: 1px; }
.viewtools svg { width: 12px; height: 11px; }
.viewtools .caret { width: 4px; height: 4px; }
.status { justify-self: end; display: flex; align-items: center; gap: 11px; }

.timeline { height: 34px; display: flex; align-items: center; gap: 7px; padding: 0 5px; background: #f0f0f0; border-top: 1px solid #ddd; border-bottom: 2px solid #555; }
.timeline button svg { width: 10px; height: 10px; }
.marker { margin-left: 6px; }
.timeline .settings { margin-left: auto; color: #777; }
.timeline .settings svg { width: 12px; height: 12px; }
```
